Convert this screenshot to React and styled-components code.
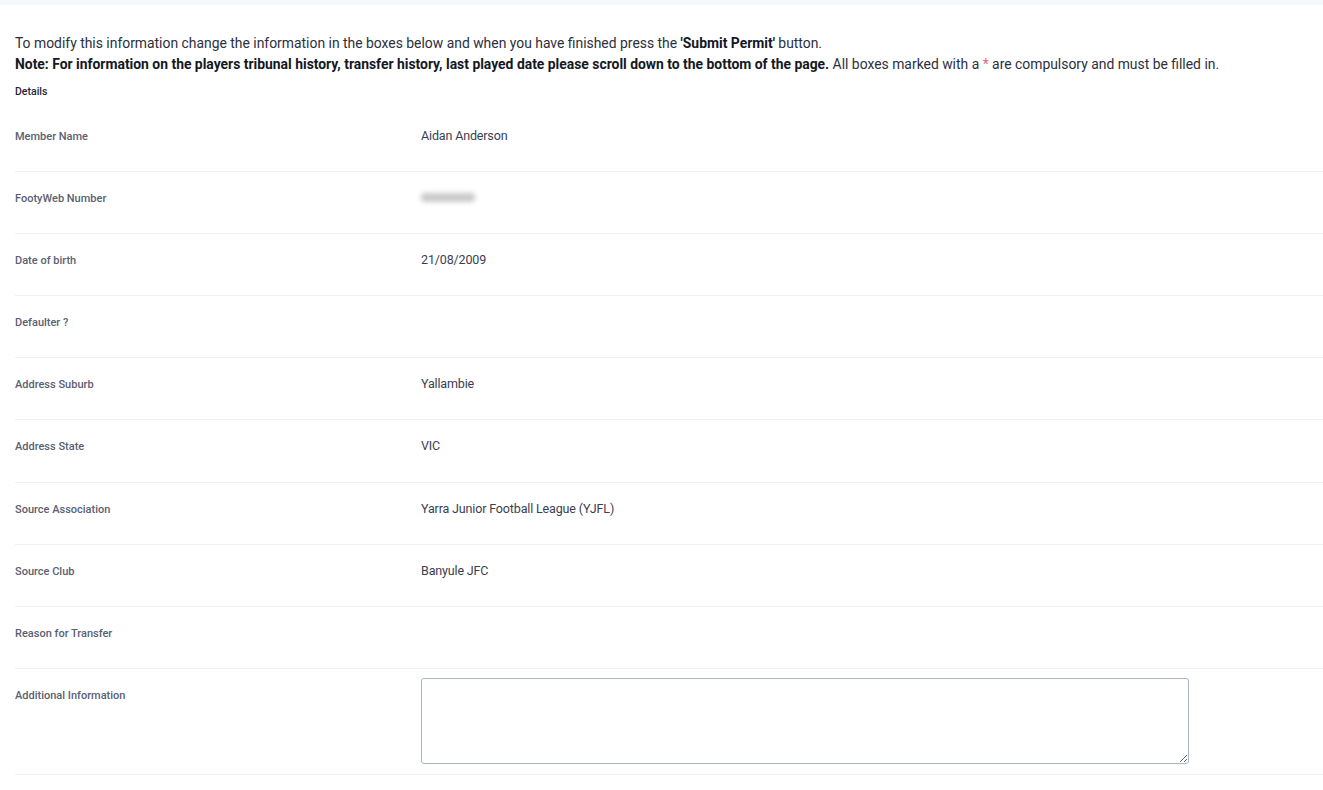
import React from "react";
import styled, { createGlobalStyle } from "styled-components";

const GlobalStyle = createGlobalStyle`
  body {
    margin: 0;
    background: #fff;
    font-family: Roboto, "Liberation Sans", sans-serif;
    color: #1f2433;
  }
`;

const TopStrip = styled.div`
  height: 5px;
  background: #f4f7fb;
`;

const Page = styled.div`
  padding: 28px 0 0 15px;
`;

const Intro = styled.p`
  margin: 0;
  font-size: 13.9px;
  line-height: 21px;
  color: #2b3040;
`;

const Strong = styled.b`
  font-weight: 700;
  color: #141823;
`;

const Star = styled.span`
  color: #e06a8a;
`;

const SectionTitle = styled.div`
  margin-top: 10px;
  font-size: 10.5px;
  font-weight: 500;
  color: #1f2433;
  height: 14px;
`;

const Rows = styled.div`
  margin-top: 11px;
`;

const Row = styled.div`
  display: grid;
  grid-template-columns: 406px 1fr;
  min-height: ${p => (p.tall ? "105px" : "61.1px")};
  border-bottom: 1px solid #edf1f5;
`;

const Label = styled.div`
  padding-top: 20px;
  font-size: 11px;
  font-weight: 500;
  color: #5a6172;
`;

const Value = styled.div`
  padding-top: 18px;
  font-size: 12.5px;
  color: #3a4052;
  letter-spacing: -0.15px;
`;

const Blurred = styled.span`
  display: inline-block;
  margin-top: 2px;
  width: 54px;
  height: 9px;
  background: #c9c9c9;
  border-radius: 4px;
  filter: blur(2.5px);
`;

const InputCell = styled.div`
  padding: 9px 0 9px;
`;

const TextArea = styled.textarea`
  display: block;
  box-sizing: border-box;
  width: 768px;
  height: 86px;
  border: 1px solid #a9b6c5;
  border-radius: 3px;
  margin: 0;
  padding: 6px;
  font-family: inherit;
`;

const rows = [
  ["Member Name", "Aidan Anderson"],
  ["FootyWeb Number", "blur"],
  ["Date of birth", "21/08/2009"],
  ["Defaulter ?", ""],
  ["Address Suburb", "Yallambie"],
  ["Address State", "VIC"],
  ["Source Association", "Yarra Junior Football League (YJFL)"],
  ["Source Club", "Banyule JFC"],
  ["Reason for Transfer", ""],
];

export default function App() {
  return (
    <>
      <GlobalStyle />
      <TopStrip />
      <Page>
        <Intro>
          To modify this information change the information in the boxes below and when you have finished press the{" "}
          <Strong>'Submit Permit'</Strong> button.
          <br />
          <Strong>
            Note: For information on the players tribunal history, transfer history, last played date please scroll down to the bottom of the page.
          </Strong>{" "}
          All boxes marked with a <Star>*</Star> are compulsory and must be filled in.
        </Intro>
        <SectionTitle>Details</SectionTitle>
        <Rows>
          {rows.map(([label, value]) => (
            <Row key={label}>
              <Label>{label}</Label>
              <Value>{value === "blur" ? <Blurred /> : value}</Value>
            </Row>
          ))}
          <Row tall>
            <Label>Additional Information</Label>
            <InputCell>
              <TextArea />
            </InputCell>
          </Row>
        </Rows>
      </Page>
    </>
  );
}
